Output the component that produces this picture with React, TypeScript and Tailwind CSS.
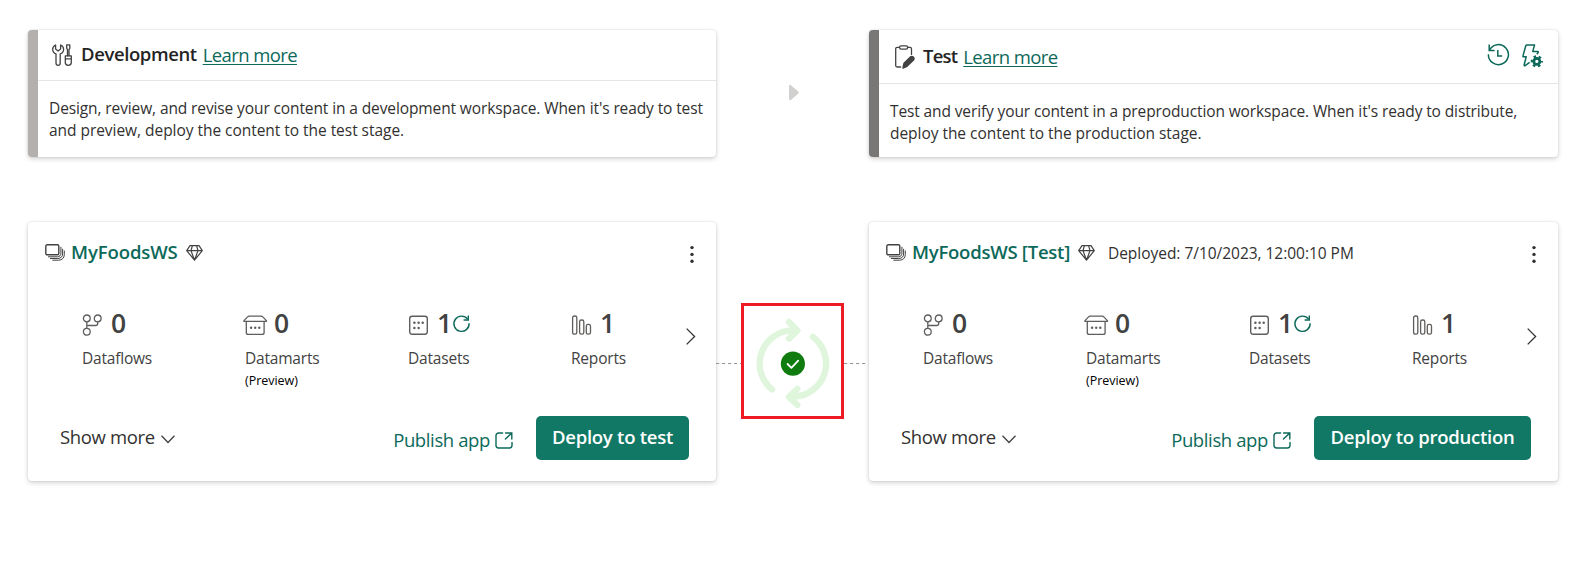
import type { ReactNode } from "react";

const ICON = "shrink-0 overflow-visible";

function ToolsIcon() {
  return (
    <svg className={`${ICON} mt-[3px]`} width="20" height="22" viewBox="0 0 20 22" fill="none" stroke="#424242" strokeWidth="1.3" strokeLinejoin="round" strokeLinecap="round">
      <path d="M3.6 1 C1.8 1.8 .7 3.3 .7 5.2 C.7 7.4 2 9.2 4 9.9 V19 C4 20.4 5 21.3 6.1 21.3 C7.3 21.3 8.2 20.4 8.2 19 V9.9 C10.2 9.2 11.6 7.4 11.6 5.2 C11.6 3.3 10.4 1.8 8.6 1 V5 L6.1 7 L3.6 5 Z" />
      <path d="M14.7 .9 H17.8 V4.2 L17 5.6 V11.8 M14.7 .9 V4.2 L15.5 5.6 V11.8" />
      <path d="M13.3 11.8 H19.3 V18.6 C19.3 20.3 18 21.3 16.3 21.3 C14.6 21.3 13.3 20.3 13.3 18.6 Z M13.3 14.8 H19.3" />
    </svg>
  );
}

function ClipboardIcon() {
  return (
    <svg className={`${ICON} mt-[2px]`} width="20" height="24" viewBox="0 0 20 24" fill="none" stroke="#424242" strokeWidth="1.3" strokeLinejoin="round" strokeLinecap="round">
      <path d="M4.2 2.4 H2.2 C1.3 2.4 .7 3 .7 3.9 V20.5 C.7 21.4 1.3 22 2.2 22 H5.6 M12.8 2.4 H15 C15.9 2.4 16.5 3 16.5 3.9 V9.4" />
      <rect x="4.6" y=".8" width="8" height="3.3" rx="1.4" />
      <path d="M8.2 21.2 L9 18.3 L15.6 11.8 C17.3 10.6 20.1 12.6 18.8 14.8 L12 21.4 L8 23.2 Z" fill="#424242" />
    </svg>
  );
}

function HistoryIcon() {
  return (
    <svg className={ICON} width="22" height="23" viewBox="0 0 22 23" fill="none" stroke="#0c695a" strokeWidth="1.5">
      <path d="M2.4 6.2 A10 10 0 1 1 1.4 10.2" />
      <path d="M2.2 .6 V6.4 H7.6 M10.8 6 V12 H15.2" />
    </svg>
  );
}

function BoltGearIcon() {
  return (
    <svg className={ICON} width="22" height="24" viewBox="0 0 22 24" fill="none" stroke="#0c695a" strokeWidth="1.5" strokeLinejoin="round">
      <path d="M7.6 18.4 L3.2 21.6 C2.4 22 2 21.6 2.2 20.8 L4.2 12.8 H1.6 C1 12.8 .8 12.4 1 11.8 L3.8 1.8 C4 1.2 4.4 .9 5 .9 H12.6 L10.8 7.4 H15.6 C16.4 7.4 16.6 8.2 16 8.8 L14.8 10.2" />
      <circle cx="14.8" cy="17.4" r="3" strokeWidth="2.8" />
      <circle cx="14.8" cy="17.4" r="5" strokeWidth="2.2" strokeDasharray="2.5 2.736" strokeDashoffset="1.25" />
    </svg>
  );
}

function StackIcon() {
  return (
    <svg className={ICON} width="20" height="17" viewBox="0 0 20 17" fill="none" stroke="#424242" strokeWidth="1" strokeLinecap="round">
      <rect x=".8" y=".8" width="13" height="10" rx="1.4" strokeWidth="1.4" />
      <path d="M3.4 12.8 H12.4 C14.6 12.8 15.9 11.4 15.9 9.2 V3.2 M5.4 14.5 H12.8 C15.8 14.5 17.6 12.6 17.6 10 V5.2 M7.8 16.2 H13.4 C17 16.2 19.3 14 19.3 10.6 V7" />
    </svg>
  );
}

function DiamondIcon() {
  return (
    <svg className={ICON} width="17" height="16" viewBox="0 0 17 16" fill="none" stroke="#424242" strokeWidth="1.2" strokeLinejoin="round">
      <path d="M4 .7 H13 L16.3 5.6 L8.5 15.2 L.7 5.6 Z M.7 5.6 H16.3 M6.4 .7 L5 5.6 L8.5 15.2 L12 5.6 L10.6 .7" />
    </svg>
  );
}

function DataflowIcon() {
  return (
    <svg className={ICON} width="20" height="22" viewBox="0 0 20 22" fill="none" stroke="#605e5c" strokeWidth="1.3">
      <circle cx="4.8" cy="4.4" r="3.4" />
      <circle cx="15.7" cy="4.4" r="3.4" />
      <circle cx="4.8" cy="17.8" r="3.4" />
      <path d="M4.8 7.8 V14.4 M4.8 11.5 H13.7 C15.1 11.5 15.7 10.6 15.7 9.4 V7.8" />
    </svg>
  );
}

function DatamartIcon() {
  return (
    <svg className={`${ICON} -ml-[2px]`} width="25" height="22" viewBox="0 0 25 22" fill="none" stroke="#605e5c" strokeWidth="1.3" strokeLinejoin="round">
      <path d="M6.2 2.2 H18.2 C18.9 2.2 19.4 2.4 19.8 2.9 L23.4 6.6 C23.7 7 23.5 7.4 23 7.4 H1.4 C.9 7.4 .7 7 1 6.6 L4.6 2.9 C5 2.4 5.5 2.2 6.2 2.2 Z" />
      <path d="M3.3 7.4 V18.4 C3.3 19.6 4.1 20.4 5.3 20.4 H19.1 C20.3 20.4 21.1 19.6 21.1 18.4 V7.4" />
      <g fill="#605e5c" stroke="none">
        <circle cx="8.1" cy="13.8" r="1.2" />
        <circle cx="12.2" cy="13.8" r="1.2" />
        <circle cx="16.3" cy="13.8" r="1.2" />
      </g>
    </svg>
  );
}

function DatasetIcon() {
  return (
    <svg className={ICON} width="20" height="22" viewBox="0 0 20 22" fill="none" stroke="#605e5c" strokeWidth="1.4">
      <rect x="1.7" y="2.2" width="17.6" height="18" rx="2.4" />
      <g fill="#605e5c" stroke="none">
        <circle cx="6.4" cy="8.7" r="1.25" />
        <circle cx="10.6" cy="8.7" r="1.25" />
        <circle cx="14.7" cy="8.7" r="1.25" />
        <circle cx="6.4" cy="13.9" r="1.25" />
        <circle cx="10.6" cy="13.9" r="1.25" />
      </g>
    </svg>
  );
}

function ReportIcon() {
  return (
    <svg className={ICON} width="20" height="22" viewBox="0 0 20 22" fill="none" stroke="#605e5c" strokeWidth="1.3">
      <rect x="1.6" y="2" width="4.2" height="18.2" rx="1.8" />
      <rect x="8.6" y="6" width="4.2" height="14.2" rx="1.8" />
      <rect x="15.3" y="10.4" width="4.2" height="9.8" rx="1.8" />
    </svg>
  );
}

function RefreshIcon() {
  return (
    <svg className={ICON} width="17" height="17" viewBox="0 0 17 17" fill="none" stroke="#0c695a" strokeWidth="1.4">
      <path d="M14.6 4.2 A7.6 7.6 0 1 0 16.1 8.2" />
      <path d="M15.3 .6 V5 H10.6" />
    </svg>
  );
}

function OpenIcon() {
  return (
    <svg className={ICON} width="18" height="17" viewBox="0 0 18 17" fill="none" stroke="#0c695a" strokeWidth="1.4" strokeLinecap="round">
      <path d="M7.6 1 H3.6 C2 1 1 2 1 3.4 V13.6 C1 15 2 16 3.6 16 H14.4 C16 16 17 15 17 13.6 V10.4" />
      <path d="M10.6 1 H16.8 V7 M16.6 1.2 L10.4 7" />
    </svg>
  );
}

function SyncStatus() {
  return (
    <svg width="97" height="110" viewBox="0 0 97 110" fill="none" stroke="#dff6dd" strokeWidth="6.4" strokeLinecap="round" strokeLinejoin="round">
      <path d="M28 83.4 A33.2 33.2 0 0 1 48 24.4 H52" />
      <path d="M45 16 L53.4 24.4 L45 32.6" />
      <path d="M69 31 A33.2 33.2 0 0 1 50 90.6 H46" />
      <path d="M53.4 83 L45 91 L53.4 99" />
      <circle cx="48.9" cy="57.7" r="12.1" fill="#107c10" stroke="none" />
      <path d="M43.6 58 L47.4 61.8 L54.2 54.6" stroke="#fff" strokeWidth="1.8" />
    </svg>
  );
}

type StageProps = {
  barClass: string;
  headClass: string;
  bodyClass: string;
  icon: ReactNode;
  title: string;
  titleClass: string;
  lines: [string, string];
  lineClass: string;
  actions?: ReactNode;
};

const CARD = "rounded-[4px] bg-white shadow-[0_0_2px_rgba(0,0,0,0.14),0_2px_5px_rgba(0,0,0,0.17)]";

function StageCard({ barClass, headClass, bodyClass, icon, title, titleClass, lines, lineClass, actions }: StageProps) {
  return (
    <section className={`flex h-[127px] overflow-hidden ${CARD}`}>
      <div className={`w-[10px] shrink-0 ${barClass}`} />
      <div className="flex-1">
        <header className={`flex items-start border-b border-[#e5e5e5] ${headClass}`}>
          {icon}
          <h2 className={`font-semibold whitespace-nowrap text-[18.5px] leading-[26px] text-[#242424] ${titleClass}`}>{title}</h2>
          <a className="ml-[6px] mt-px whitespace-nowrap text-[18.5px] leading-[26px] tracking-[-0.6px] text-[#0c695a] underline decoration-1 underline-offset-[2px]">
            Learn more
          </a>
          {actions}
        </header>
        <p className={`whitespace-nowrap text-[15.5px] text-[#323130] ${bodyClass}`}>
          <span className={`block ${lineClass}`}>{lines[0]}</span>
          <span className="block leading-[22px] tracking-[-0.04px]">{lines[1]}</span>
        </p>
      </div>
    </section>
  );
}

function Stat({ icon, value, label, note, extra }: { icon: ReactNode; value: number; label: string; note?: string; extra?: ReactNode }) {
  return (
    <div>
      <div className="flex h-[34px] items-start">
        <div className="mt-[6px] w-[28px] shrink-0">{icon}</div>
        <span className="-mt-[2px] ml-px w-[17px] text-[26.5px] leading-[34px] font-semibold text-[#424242]">{value}</span>
        {extra}
      </div>
      <div className="mt-[5px] text-[15.5px] leading-[22px] tracking-[-0.2px] text-[#424242]">{label}</div>
      {note && <div className="mt-[2px] text-[12.5px] leading-[20px] tracking-[-0.03px] text-black">{note}</div>}
    </div>
  );
}

function WorkspaceCard({ name, nameClass, deployed, action, actionClass }: { name: string; nameClass: string; deployed?: string; action: string; actionClass: string }) {
  return (
    <section className={`flex h-[259px] flex-col ${CARD}`}>
      <div className="flex h-[43px] items-start pt-[17px] pl-[17px]">
        <div className="mt-[5px] mr-[6px]"><StackIcon /></div>
        <h3 className={`font-semibold whitespace-nowrap text-[18.5px] leading-[26px] text-[#0c695a] ${nameClass}`}>{name}</h3>
        <div className="mt-[6px] ml-[8px]"><DiamondIcon /></div>
        {deployed && (
          <span className="ml-[13px] mt-px whitespace-nowrap text-[15.5px] leading-[26px] tracking-[-0.03px] text-[#323130]">{deployed}</span>
        )}
        <svg className="mt-[6px] mr-[22px] ml-auto" width="4" height="19" viewBox="0 0 4 19" fill="#323130">
          <circle cx="2" cy="2.6" r="1.7" />
          <circle cx="2" cy="9.4" r="1.7" />
          <circle cx="2" cy="16.2" r="1.7" />
        </svg>
      </div>
      <div className="mt-[43px] flex pl-[54px]">
        <div className="grid grid-cols-[163px_163px_163px_115px]">
          <Stat icon={<DataflowIcon />} value={0} label="Dataflows" />
          <Stat icon={<DatamartIcon />} value={0} label="Datamarts" note="(Preview)" />
          <Stat icon={<DatasetIcon />} value={1} label="Datasets" extra={<div className="mt-[7px] -ml-px"><RefreshIcon /></div>} />
          <Stat icon={<ReportIcon />} value={1} label="Reports" />
        </div>
        <svg className="mt-[20px]" width="10" height="17" viewBox="0 0 10 17" fill="none" stroke="#323130" strokeWidth="1.3">
          <path d="M.7 .6 L8.6 8.5 L.7 16.4" />
        </svg>
      </div>
      <div className="mt-auto mb-[21px] flex h-[44px] items-start pr-[27px] pl-[32px]">
        <button className="mt-[6px] flex items-center gap-[6px] pt-[2px] text-[18.5px] leading-[26px] tracking-[-0.35px] whitespace-nowrap text-[#323130]">
          Show more
          <svg className="mt-[4px]" width="14" height="9" viewBox="0 0 14 9" fill="none" stroke="#424242" strokeWidth="1.3">
            <path d="M.5 .7 L7 7.5 L13.5 .7" />
          </svg>
        </button>
        <a className="mt-[11px] ml-auto flex gap-[5px] whitespace-nowrap text-[18.5px] leading-[26px] tracking-[-0.38px] text-[#0c695a]">
          Publish app
          <span className="mt-[5px]"><OpenIcon /></span>
        </a>
        <button className={`ml-[23px] h-[44px] rounded-[5px] bg-[#117865] pb-[3px] text-[18.5px] leading-[26px] font-semibold whitespace-nowrap text-white ${actionClass}`}>
          {action}
        </button>
      </div>
    </section>
  );
}

export default function App() {
  return (
    <main className="h-[573px] w-[1595px] overflow-hidden bg-white pt-[30px] pl-[28px] font-['Open_Sans','Noto_Sans',sans-serif]">
      <div className="grid grid-cols-[688px_153px_689px]">
        <StageCard
          barClass="bg-[#b3b0ad]"
          headClass="h-[51px] pt-[11px] pl-[14px]"
          bodyClass="pt-[17px] pl-[11px]"
          icon={<ToolsIcon />}
          title="Development"
          titleClass="ml-[9px] tracking-[-0.4px]"
          lines={[
            "Design, review, and revise your content in a development workspace. When it's ready to test",
            "and preview, deploy the content to the test stage.",
          ]}
          lineClass="leading-[21px] tracking-[-0.11px]"
        />
        <div className="pt-[54px] pl-[73px]">
          <svg width="10" height="17" viewBox="0 -.5 10 17" fill="#d2d0ce">
            <path d="M0 1.4 C0 .2 1.2 0 1.9 .7 L9.3 6.9 C10.1 7.6 10.1 8.4 9.3 9.1 L1.9 15.5 C1.2 16.1 0 15.8 0 14.6 Z" />
          </svg>
        </div>
        <StageCard
          barClass="bg-[#797775]"
          headClass="h-[54px] pt-[13px] pl-[16px]"
          bodyClass="pt-[16px] pl-[11px]"
          icon={<ClipboardIcon />}
          title="Test"
          titleClass="ml-[8px] tracking-[-0.8px]"
          lines={[
            "Test and verify your content in a preproduction workspace. When it's ready to distribute,",
            "deploy the content to the production stage.",
          ]}
          lineClass="leading-[22px] tracking-[-0.12px]"
          actions={
            <div className="mt-px mr-[14px] ml-auto flex gap-[13px]">
              <HistoryIcon />
              <BoltGearIcon />
            </div>
          }
        />
      </div>
      <div className="mt-[65px] grid grid-cols-[688px_153px_689px]">
        <WorkspaceCard name="MyFoodsWS" nameClass="tracking-[-0.1px]" action="Deploy to test" actionClass="w-[153px] tracking-[-0.25px]" />
        <div className="flex items-start pt-[81px]">
          <svg className="mt-[60px]" width="25" height="2" viewBox="0 0 25 2" stroke="#979593" strokeDasharray="3.2 2.8">
            <path d="M0 .5 H25" />
          </svg>
          <div className="h-[116px] w-[103px] border-[3px] border-[#ed1c24]"><SyncStatus /></div>
          <svg className="mt-[60px]" width="25" height="2" viewBox="0 0 25 2" stroke="#979593" strokeDasharray="3.2 2.8">
            <path d="M0 .5 H22" />
          </svg>
        </div>
        <WorkspaceCard
          name="MyFoodsWS [Test]"
          nameClass="tracking-[-0.25px]"
          deployed="Deployed: 7/10/2023, 12:00:10 PM"
          action="Deploy to production"
          actionClass="w-[217px] tracking-[-0.26px]"
        />
      </div>
    </main>
  );
}
